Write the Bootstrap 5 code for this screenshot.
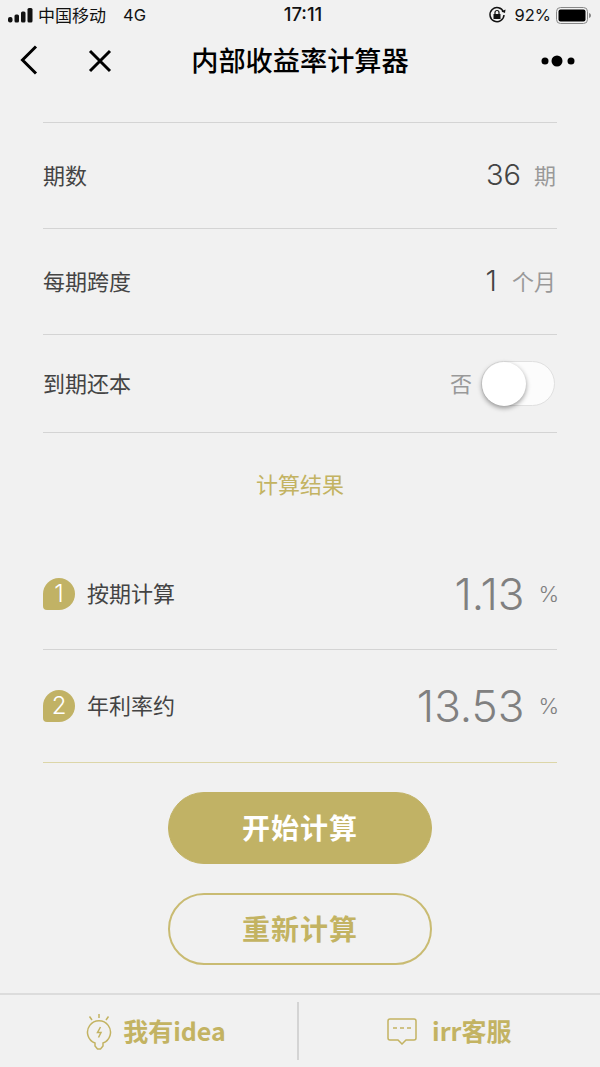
<!doctype html>
<html lang="zh"><head><meta charset="utf-8">
<link href="https://cdn.jsdelivr.net/npm/bootstrap@5.3.0/dist/css/bootstrap.min.css" rel="stylesheet">
<style>
html,body{margin:0;background:#f1f1f1;}
.screen{width:600px;height:1067px;overflow:hidden;display:flex;flex-direction:column;font-family:"Liberation Sans","Noto Sans CJK SC",sans-serif;color:#333;background:#f1f1f1;}
.cjk{font-family:"Noto Sans CJK SC",sans-serif;}
.status{height:30px;padding:0 8px 0 8px;font-size:17px;color:#111;}
.clock{font-weight:500;font-family:"Inter",sans-serif;font-size:18.5px;margin-left:3px;}
.status-txt{font-family:"Inter",sans-serif;font-size:16.5px;}
.titlebar{height:60px;padding:0 25px 0 20px;}
.title{font-size:27.2px;font-weight:500;color:#000;font-family:"Noto Sans CJK SC",sans-serif;white-space:nowrap;padding-bottom:2px;}
.nudge{margin-top:2px;}
.body-area{padding:32px 43px 0;}
.line-row{border-bottom:1px solid #d4d4d4;}
.r-top{height:1px;background:#d4d4d4;}
.r-a{height:106px;}
.r-c{height:98px;}
.lab{font-size:22px;color:#444;font-family:"Noto Sans CJK SC",sans-serif;line-height:1.2;padding-bottom:3px;}
.num{font-size:29px;color:#444;font-family:"Inter",sans-serif;font-weight:350;padding-bottom:2px;}
.unit{font-size:22px;color:#999;font-family:"Noto Sans CJK SC",sans-serif;line-height:1.2;margin-right:1px;padding-bottom:3px;}
.gap-two{gap:13px;}
.gap-one{gap:15px;}
.gap-pct{gap:14px;}
.sw-track{width:74px;height:45px;border:1px solid #e0e0e0;border-radius:23px;background:#fcfcfc;position:relative;margin-right:2px;}
.sw-knob{position:absolute;left:0;top:0;width:44px;height:44px;border-radius:50%;background:#fff;box-shadow:0 2px 5px rgba(0,0,0,.4);}
.result-title{height:106px;padding-top:37px;text-align:center;color:#c3b362;font-size:22px;line-height:1.2;font-family:"Noto Sans CJK SC",sans-serif;}
.r-res{height:111px;}
.r-res2{height:113px;border-bottom:1px solid #dcd6a8;}
.tagn{width:32px;height:32px;background:#c1b265;color:#fff;border-radius:50% 50% 50% 4px;font-size:24px;font-weight:350;font-family:"Inter",sans-serif;}
.big{font-size:44px;color:#808080;font-family:"Inter",sans-serif;font-weight:350;line-height:1;}
.pct{font-size:22px;color:#808080;font-family:"Inter",sans-serif;font-weight:300;margin-right:-2px;}
.actions{gap:29px;padding-top:29px;}
.pillb{width:264px;height:72px;border-radius:36px;font-size:28px;font-weight:700;letter-spacing:1px;font-family:"Noto Sans CJK SC",sans-serif;padding:0 0 3px;}
.pill-fill{background:#c1b265;border:1px solid #c1b265;color:#fff;}
.pill-line{background:transparent;border:2px solid #c9bb72;color:#c3b362;}
.foot{margin-top:auto;height:74px;border-top:2px solid #dcdcdc;}
.foot-left{width:297px;padding-left:15px;}
.foot-cell{color:#c3b362;font-size:25px;font-weight:700;font-family:"Noto Sans CJK SC",sans-serif;gap:11px;}
.foot-cell.flex-grow-1{gap:15px;}
.foot-sep{width:1.500px;height:58px;background:#d4d4d4;}
</style></head><body>
<div class="screen">
 <div class="status d-flex align-items-center justify-content-between position-relative">
  <div class="d-flex align-items-center" style="gap:5px">
   <svg width="25" height="15" viewBox="0 0 25 15"><rect x="0" y="9" width="4.500" height="5.500" rx="2" fill="#111"/><rect x="6.500" y="6.500" width="4.500" height="8" rx="1.500" fill="#111"/><rect x="13" y="3.500" width="4.500" height="11" rx="1.500" fill="#111"/><rect x="19.500" y="0" width="5" height="14.500" rx="1.500" fill="#111"/></svg>
   <span class="cjk">中国移动</span><span class="status-txt" style="margin-left:12px">4G</span>
  </div>
  <span class="clock position-absolute top-50 start-50 translate-middle">17:11</span>
  <div class="d-flex align-items-center" style="gap:9px">
   <svg width="18" height="18" viewBox="0 0 18 18"><path d="M15.500 6A7 7 0 1 0 16 9" fill="none" stroke="#111" stroke-width="1.500"/><path d="M13.500 5.500L17 7l.5-3.500z" fill="#111"/><rect x="5.500" y="8" width="7" height="5" fill="#111"/><path d="M7 8V6.500a2 2 0 014 0V8" fill="none" stroke="#111" stroke-width="1.200"/></svg>
   <span class="status-txt" style="margin-right:-4px">92%</span>
   <svg width="36" height="17" viewBox="0 0 36 17"><rect x=".5" y=".5" width="31" height="16" rx="4" fill="none" stroke="#888"/><rect x="2.500" y="2.500" width="27" height="12" rx="2" fill="#000"/><path d="M33 6v5c1.500-.4 2-1.400 2-2.500S34.500 6.400 33 6z" fill="#888"/></svg>
  </div>
 </div>
 <div class="titlebar d-flex align-items-center justify-content-between position-relative">
  <div class="d-flex align-items-center" style="gap:50px">
   <svg width="18" height="30" viewBox="0 0 18 30"><path d="M16 1.500L2.500 15 16 28.500" fill="none" stroke="#000" stroke-width="3"/></svg>
   <svg class="nudge" width="24" height="24" viewBox="0 0 24 24"><path d="M2 2l20 20M22 2L2 22" fill="none" stroke="#000" stroke-width="3"/></svg>
  </div>
  <span class="title position-absolute top-50 start-50 translate-middle">内部收益率计算器</span>
  <svg class="nudge" width="34" height="12" viewBox="0 0 34 12"><circle cx="4" cy="6" r="3.500" fill="#000"/><circle cx="16" cy="6" r="5.500" fill="#000"/><circle cx="30" cy="6" r="3.500" fill="#000"/></svg>
 </div>
 <div class="body-area">
  <div class="r-top"></div>
  <div class="line-row r-a d-flex align-items-center justify-content-between"><span class="lab">期数</span><span class="d-flex align-items-center gap-two"><span class="num">36</span><span class="unit">期</span></span></div>
  <div class="line-row r-a d-flex align-items-center justify-content-between"><span class="lab">每期跨度</span><span class="d-flex align-items-center gap-one"><span class="num">1</span><span class="unit">个月</span></span></div>
  <div class="line-row r-c d-flex align-items-center justify-content-between"><span class="lab">到期还本</span><span class="d-flex align-items-center gap-2"><span class="unit">否</span><span class="sw-track"><span class="sw-knob"></span></span></span></div>
  <div class="result-title">计算结果</div>
  <div class="line-row r-res d-flex align-items-center justify-content-between"><span class="d-flex align-items-center gap-2"><span class="tagn d-flex align-items-center justify-content-center">1</span><span class="lab ms-1">按期计算</span></span><span class="d-flex align-items-center gap-pct"><span class="big">1.13</span><span class="pct">%</span></span></div>
  <div class="r-res2 d-flex align-items-center justify-content-between"><span class="d-flex align-items-center gap-2"><span class="tagn d-flex align-items-center justify-content-center">2</span><span class="lab ms-1">年利率约</span></span><span class="d-flex align-items-center gap-pct"><span class="big">13.53</span><span class="pct">%</span></span></div>
 </div>
 <div class="actions d-flex flex-column align-items-center">
  <button class="btn pillb pill-fill">开始计算</button>
  <button class="btn pillb pill-line">重新计算</button>
 </div>
 <div class="foot d-flex align-items-center">
  <div class="foot-cell foot-left d-flex align-items-center justify-content-center">
   <svg width="26" height="37" viewBox="0 0 26 37" fill="none" stroke="#c3b362" stroke-width="1.500"><path d="M9 30A11.500 11.500 0 1 1 17 30V33L14.500 36H11.500L9 33Z"/><path d="M14.500 14l-3 5.500h3.500l-2.500 5"/><path d="M13 1v4M3.500 3.500L6 7M22.500 3.500L20 7"/></svg>
   <span>我有idea</span>
  </div>
  <div class="foot-sep"></div>
  <div class="foot-cell flex-grow-1 d-flex align-items-center justify-content-center">
   <svg width="30" height="27" viewBox="0 0 30 27" fill="none" stroke="#c3b362" stroke-width="1.500"><path d="M3 1h24a2 2 0 012 2v17a2 2 0 01-2 2h-8l-4 4-4-4H3a2 2 0 01-2-2V3a2 2 0 012-2z"/><path d="M6 10h4M13 10h4M20 10h4"/></svg>
   <span>irr客服</span>
  </div>
 </div>
</div>
<script src="https://cdn.jsdelivr.net/npm/bootstrap@5.3.0/dist/js/bootstrap.bundle.min.js"></script>
</body></html>
